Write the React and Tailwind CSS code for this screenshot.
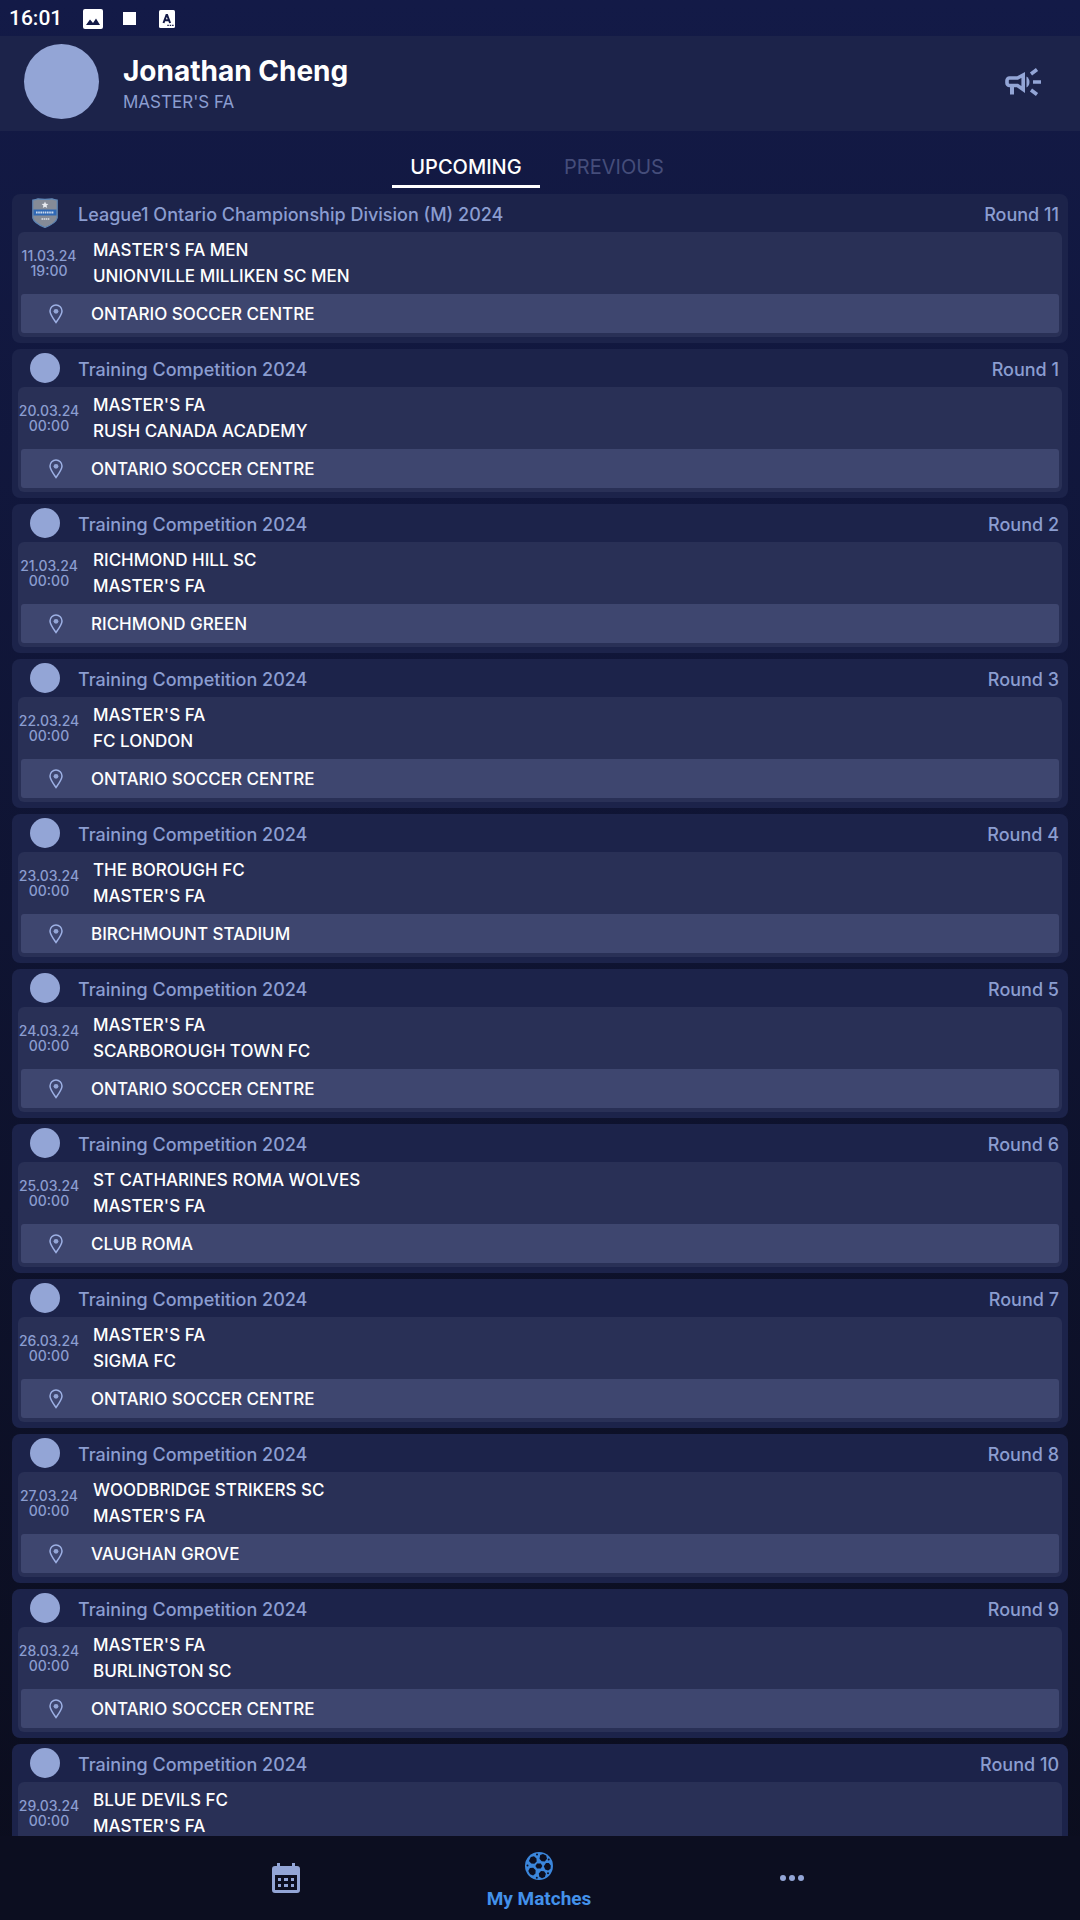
const VENUE = "ONTARIO SOCCER CENTRE";
const TRAINING = "Training Competition 2024";

const matches = [
  { league: "League1 Ontario Championship Division (M) 2024", crest: true, round: 11, date: "11.03.24", time: "19:00", home: "MASTER'S FA MEN", away: "UNIONVILLE MILLIKEN SC MEN", venue: VENUE },
  { league: TRAINING, round: 1, date: "20.03.24", time: "00:00", home: "MASTER'S FA", away: "RUSH CANADA ACADEMY", venue: VENUE },
  { league: TRAINING, round: 2, date: "21.03.24", time: "00:00", home: "RICHMOND HILL SC", away: "MASTER'S FA", venue: "RICHMOND GREEN" },
  { league: TRAINING, round: 3, date: "22.03.24", time: "00:00", home: "MASTER'S FA", away: "FC LONDON", venue: VENUE },
  { league: TRAINING, round: 4, date: "23.03.24", time: "00:00", home: "THE BOROUGH FC", away: "MASTER'S FA", venue: "BIRCHMOUNT STADIUM" },
  { league: TRAINING, round: 5, date: "24.03.24", time: "00:00", home: "MASTER'S FA", away: "SCARBOROUGH TOWN FC", venue: VENUE },
  { league: TRAINING, round: 6, date: "25.03.24", time: "00:00", home: "ST CATHARINES ROMA WOLVES", away: "MASTER'S FA", venue: "CLUB ROMA" },
  { league: TRAINING, round: 7, date: "26.03.24", time: "00:00", home: "MASTER'S FA", away: "SIGMA FC", venue: VENUE },
  { league: TRAINING, round: 8, date: "27.03.24", time: "00:00", home: "WOODBRIDGE STRIKERS SC", away: "MASTER'S FA", venue: "VAUGHAN GROVE" },
  { league: TRAINING, round: 9, date: "28.03.24", time: "00:00", home: "MASTER'S FA", away: "BURLINGTON SC", venue: VENUE },
  { league: TRAINING, round: 10, date: "29.03.24", time: "00:00", home: "BLUE DEVILS FC", away: "MASTER'S FA" },
];

function StatusBar() {
  return (
    <div className="flex h-9 shrink-0 items-center pt-px pl-[9px] text-white">
      <span className="w-[74px] font-['Roboto',sans-serif] text-[21px] font-medium">16:01</span>
      <svg className="mr-5 size-5" viewBox="0 0 20 20" aria-hidden="true">
        <rect width="20" height="20" rx="2" fill="#fff" />
        <path d="M3 16l4-5.500 3 3.500 3-4.500 4 6.500z" fill="#131a47" />
      </svg>
      <span className="mr-[23px] size-[13px] bg-white" />
      <svg className="h-[18px] w-4" viewBox="0 0 16 18" aria-hidden="true">
        <rect width="16" height="18" rx="1.500" fill="#fff" />
        <path d="M4.500 13L7.500 5h.6l3 8M5.700 10.300h4.300" fill="none" stroke="#131a47" strokeWidth="2" />
        <path d="M8.300 15.300h1.500M10.700 15.300h1.500M13.100 15.300h1.500" stroke="#131a47" strokeWidth="1.300" />
      </svg>
    </div>
  );
}

function Megaphone() {
  return (
    <svg className="h-7 w-9" viewBox="0 0 36 28" aria-hidden="true">
      <g fill="none" stroke="#93a5d6">
        <path d="M18.200 7v14.500L12.500 17.500H4.500a2.500 2.500 0 0 1-2.500-2.500v-2.500a2.500 2.500 0 0 1 2.500-2.500h8z" strokeWidth="3.600" />
        <path d="M7 18v8.500" strokeWidth="4" />
        <path d="M26 6l6-4.500M28 14h8M26 22l6 4.500" strokeWidth="3.600" />
      </g>
      <path d="M21.500 8.500q3 2 3 5.500t-3 5.500z" fill="#93a5d6" />
    </svg>
  );
}

function Crest() {
  return (
    <svg className="h-[30px] w-[26px]" viewBox="0 0 26 30" aria-hidden="true">
      <path d="M.8 2Q4 2 6 .8q7 1 14 0Q22 2 25.200 2v18q-1 5-12.200 9.500Q2 25 .8 20z" fill="#858b97" stroke="#5f86b5" strokeWidth="1.200" />
      <path d="M1.500 11.500h23v6h-23z" fill="#2f68b5" />
      <path d="M4 14.500h18" stroke="#c9d8ee" strokeWidth="1.800" strokeDasharray="1.600 .6" />
      <path d="M13 3.500l1 2.300 2.400.2-1.800 1.600.6 2.400-2.200-1.300-2.200 1.300.6-2.400L9.600 6l2.400-.2z" fill="#e8ebf0" />
      <path d="M9.500 21h8" stroke="#e0e3ea" strokeWidth="1.500" strokeDasharray="1.500 .6" />
    </svg>
  );
}

function Pin() {
  return (
    <svg className="h-5 w-[14px]" viewBox="0 0 14 20" aria-hidden="true">
      <path d="M7 1a6 6 0 0 1 6 6c0 3.500-3.500 8-6 11.500C4.500 15 1 10.500 1 7a6 6 0 0 1 6-6z" fill="none" stroke="#9db0e4" strokeWidth="1.500" />
      <circle cx="7" cy="7.300" r="2.400" fill="#93a5d6" />
    </svg>
  );
}

function MatchCard({ match }) {
  return (
    <article className="shrink-0 rounded-lg bg-[#1c234a] px-1.5 pb-1.5">
      <header className="flex h-[38px] items-center text-[18px] font-medium text-[#8b9dd0]">
        <div className="flex w-[54px] justify-center pr-px">
          {match.crest ? <Crest /> : <span className="size-[30px] rounded-full bg-[#93a5d6]" />}
        </div>
        <h2 className="ml-1.5 pt-0.5">{match.league}</h2>
        <span className="ml-auto pt-0.5 pr-[3px]">Round {match.round}</span>
      </header>
      <div className="rounded-md bg-[#293056] px-[3px] pb-1">
        <div className="flex h-[62px]">
          <div className="flex w-14 flex-col items-center justify-center text-[14px] leading-[15px] font-medium whitespace-nowrap text-[#8b9dd0]">
            <span>{match.date}</span>
            <span>{match.time}</span>
          </div>
          <div className="ml-4 pt-[5px] text-[17px] leading-[26px] font-medium text-white">
            <p>{match.home}</p>
            <p>{match.away}</p>
          </div>
        </div>
        {match.venue && (
          <div className="flex h-[39px] items-center rounded-[3px] bg-[#3e466f]">
            <div className="flex w-[70px] justify-center">
              <Pin />
            </div>
            <span className="pt-0.5 text-[17px] font-medium text-white">{match.venue}</span>
          </div>
        )}
      </div>
    </article>
  );
}

function CalendarIcon() {
  return (
    <svg className="h-[30px] w-7" viewBox="0 0 28 30" fill="#93a5d6" aria-hidden="true">
      <path fillRule="evenodd" d="M5 0h3v3h12V0h3v3h2a3 3 0 0 1 3 3v21a3 3 0 0 1-3 3H3a3 3 0 0 1-3-3V6a3 3 0 0 1 3-3h2zM3 12v15h22V12z" />
      <path d="M6 15h3v3H6zM12 15h4v3h-4zM19 15h3v3h-3zM6 21h3v3H6zM12 21h4v3h-4zM19 21h3v3h-3z" />
    </svg>
  );
}

function BallIcon() {
  return (
    <svg className="size-[30px]" viewBox="0 0 30 30" aria-hidden="true">
      <circle cx="15" cy="15" r="14" fill="#3b86dc" />
      <g fill="#0c0e20">
        <path d="M13 12.500h3.800l1.500 2.500-1.500 2.500h-3.800l-1.600-2.500z" />
        <path d="M16.200 4l2.800-1 3.200 1.500.8 3.200-2.200 2.800-3.100-.2-2.200-2.600z" />
        <path d="M6.800 6l3.200-.8 2.500 2.200.2 3-2.300 2.300-3.200-.2-2.300-2.600z" />
        <path d="M22 12h2.800l2 2.500-.3 3.200-2.400 1.800-2.900-.9-1.400-3.400z" />
        <path d="M5.900 17l3.300-.2 2.400 2.300-.1 3.300-2.400 2.100-3-1.200-1.800-3.200z" />
        <path d="M17 20l3.100.2 1.800 2.500-1 3.200-2.900 1.300-2.700-1.500-.5-3.200z" />
        <circle cx="3.500" cy="14.500" r="1" />
        <circle cx="13" cy="3.400" r="1" />
        <circle cx="12.800" cy="26.700" r="1" />
        <circle cx="24.700" cy="8.600" r="1" />
        <circle cx="24" cy="22.200" r="1" />
      </g>
    </svg>
  );
}

export default function App() {
  return (
    <div className="flex h-screen flex-col overflow-hidden bg-linear-to-b from-[#131a47] to-[#0b0d1d] font-['Inter',sans-serif]">
      <StatusBar />
      <header className="flex h-[95px] shrink-0 items-center bg-[#1c234a] pr-[39px] pb-1 pl-6">
        <span className="size-[75px] rounded-full bg-[#93a5d6]" />
        <div className="ml-6 pt-1.5">
          <h1 className="text-[28px] leading-[34px] font-bold text-white">Jonathan Cheng</h1>
          <p className="text-[17px] leading-7 text-[#8b9dd0]">MASTER'S FA</p>
        </div>
        <button type="button" aria-label="Announcements" className="ml-auto">
          <Megaphone />
        </button>
      </header>
      <div role="tablist" className="flex shrink-0 justify-center pt-3.5 pb-1.5 text-[20px]">
        <button type="button" role="tab" aria-selected="true" className="h-[43px] w-[148px] border-b-3 border-white pt-1 font-medium text-white">UPCOMING</button>
        <button type="button" role="tab" aria-selected="false" className="h-[43px] w-[148px] border-b-3 border-transparent pt-1 text-[#454d7a]">PREVIOUS</button>
      </div>
      <main className="flex min-h-0 flex-1 flex-col gap-1.5 overflow-hidden px-3">
        {matches.map((match) => (
          <MatchCard key={match.date} match={match} />
        ))}
      </main>
      <nav className="grid h-[84px] shrink-0 grid-cols-3 bg-[#0c0e20] pr-[161px] pl-[159px]">
        <a href="#calendar" aria-label="Calendar" className="flex items-center justify-center">
          <CalendarIcon />
        </a>
        <a href="#matches" aria-current="page" className="flex flex-col items-center pt-[15px] font-['Roboto',sans-serif] text-[19px] leading-[36px] font-bold text-[#4391ea]">
          <BallIcon />
          <span>My Matches</span>
        </a>
        <a href="#more" aria-label="More" className="flex items-center justify-center">
          <svg className="h-2 w-6" viewBox="0 0 24 8" fill="#93a5d6" aria-hidden="true">
            <circle cx="3" cy="4" r="3" />
            <circle cx="12" cy="4" r="3" />
            <circle cx="21" cy="4" r="3" />
          </svg>
        </a>
      </nav>
    </div>
  );
}
